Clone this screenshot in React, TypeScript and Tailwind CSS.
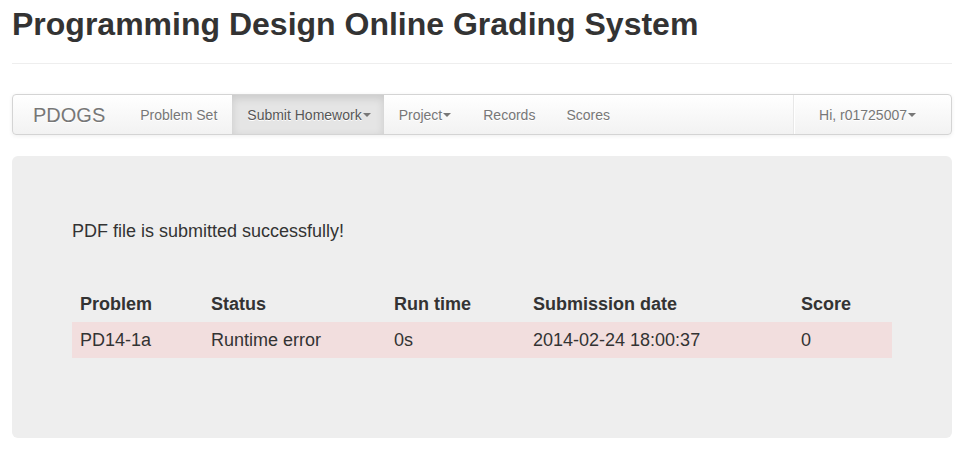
import React from "react";

const navLinks = [
  { label: "Problem Set", caret: false, active: false, pr: "pr-[15px]" },
  { label: "Submit Homework", caret: true, active: true, pr: "pr-[13px]" },
  { label: "Project", caret: true, active: false, pr: "pr-[17px]" },
  { label: "Records", caret: false, active: false, pr: "pr-[16px]" },
  { label: "Scores", caret: false, active: false, pr: "pr-[15px]" },
];

const columns = [
  { label: "Problem", width: "w-[131px]" },
  { label: "Status", width: "w-[183px]" },
  { label: "Run time", width: "w-[139px]" },
  { label: "Submission date", width: "w-[268px]" },
  { label: "Score", width: "w-[99px]" },
];

const rows = [["PD14-1a", "Runtime error", "0s", "2014-02-24 18:00:37", "0"]];

function Caret() {
  return (
    <span className="ml-[1px] mt-[8px] inline-block h-0 w-0 align-top border-t-[4px] border-x-[4px] border-t-[#777] border-x-transparent" />
  );
}

export default function App() {
  return (
    <div className="min-h-screen bg-white font-['Liberation_Sans',Arial,sans-serif] text-[#333]">
      <div className="ml-[12px] w-[940px]">
        {/* Page header */}
        <div className="pt-[4px] pb-[9px] border-b border-[#eee]">
          <h1 className="mb-[10px] text-[32px] leading-[40px] font-bold text-[#333]">
            Programming Design Online Grading System
          </h1>
        </div>

        {/* Navbar */}
        <div className="mt-[30px] mb-[21px] flex h-[41px] items-stretch rounded-[4px] border border-[#d4d4d4] bg-gradient-to-b from-white to-[#f2f2f2] pr-[20px] shadow-[0_1px_4px_rgba(0,0,0,0.065)]">
          <a className="block px-[20px] pt-[10px] text-[20px] leading-[20px] text-[#777] [text-shadow:0_1px_0_#fff]">
            PDOGS
          </a>
          <ul className="flex">
            {navLinks.map((link) => (
              <li key={link.label}>
                <a
                  className={`block h-full pl-[15px] pt-[10px] text-[14px] leading-[20px] [text-shadow:0_1px_0_#fff] ${link.pr} ${
                    link.active
                      ? "bg-[#e5e5e5] text-[#555] shadow-[inset_0_3px_8px_rgba(0,0,0,0.125)]"
                      : "text-[#777]"
                  }`}
                >
                  {link.label}
                  {link.caret && <Caret />}
                </a>
              </li>
            ))}
          </ul>
          <ul className="ml-auto flex">
            <li className="mx-[9px] h-full border-l border-r border-l-[#e8e8e8] border-r-white" />
            <li>
              <a className="block px-[15px] pt-[10px] text-[14px] leading-[20px] text-[#777] [text-shadow:0_1px_0_#fff]">
                Hi, r01725007
                <Caret />
              </a>
            </li>
          </ul>
        </div>

        {/* Hero */}
        <div className="rounded-[6px] bg-[#eee] p-[60px] text-[18px] leading-[30px]">
          <p className="mb-[40px]">PDF file is submitted successfully!</p>
          <table className="mb-[20px] w-[820px] border-collapse text-left leading-[20px]">
            <thead>
              <tr>
                {columns.map((col) => (
                  <th key={col.label} className={`${col.width} p-[8px] font-bold`}>
                    {col.label}
                  </th>
                ))}
              </tr>
            </thead>
            <tbody>
              {rows.map((row, i) => (
                <tr key={i} className="bg-[#f2dede]">
                  {row.map((cell, j) => (
                    <td key={j} className="p-[8px]">
                      {cell}
                    </td>
                  ))}
                </tr>
              ))}
            </tbody>
          </table>
        </div>
      </div>
    </div>
  );
}
